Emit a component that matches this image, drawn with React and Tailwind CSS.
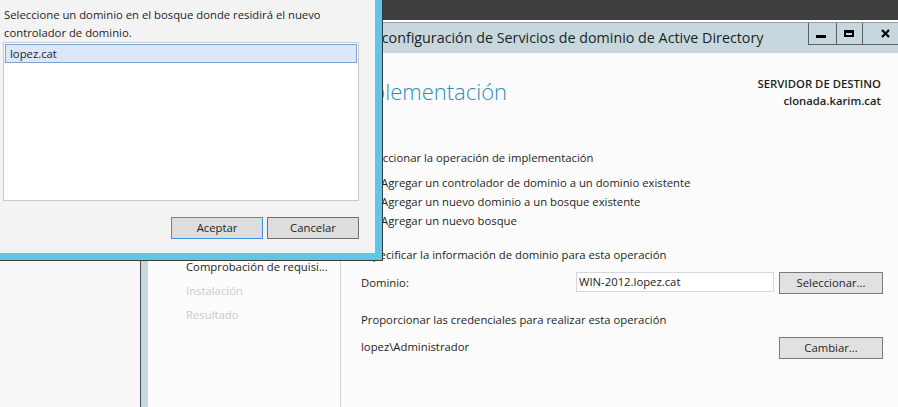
import React from "react";

function Radio() {
  return (
    <span className="inline-block w-[13px] h-[13px] rounded-full border border-[#333] bg-white mr-[5px] shrink-0" />
  );
}

function WinButton({ children, className = "" }) {
  return (
    <button
      className={
        "h-[22px] w-[104px] border border-[#7a7a7a] bg-[#e1e1e1] text-[#1e1e1e] text-[11.3px] leading-[20px] " +
        className
      }
    >
      {children}
    </button>
  );
}

export default function App() {
  const nav = [
    { t: "Configuración de implem...", c: "text-[#1e1e1e]" },
    { t: "Opciones del controlador...", c: "text-[#1e1e1e]" },
    { t: "Opciones adicionales", c: "text-[#1e1e1e]" },
    { t: "Rutas de acceso", c: "text-[#1e1e1e]" },
    { t: "Revisar opciones", c: "text-[#1e1e1e]" },
    { t: "Comprobación de requisi...", c: "text-[#1e1e1e]" },
    { t: "Instalación", c: "text-[#c8c8c8]" },
    { t: "Resultado", c: "text-[#c8c8c8]" },
  ];

  return (
    <div className="relative w-[898px] h-[407px] overflow-hidden bg-[#f7f7f7] font-['Open_Sans',sans-serif] text-[11.3px] text-[#1e1e1e]">
      <div className="flex flex-col h-full">
        <div className="h-[20px] shrink-0 bg-[#3f3f3f]" />
        <div className="flex flex-1 min-h-0">
          <div className="w-[140px] shrink-0 bg-[#f7f7f7]" />
          <div className="flex-1 flex flex-col border-l border-[#4a5156] bg-[#c6d8dd]">
            <div className="h-[2px] bg-white shrink-0" />
            <div className="h-px bg-[#8fa1a7] shrink-0" />
            {/* title bar */}
            <div className="relative h-[30px] shrink-0 flex items-center justify-center pl-[7px]">
              <span className="text-[14.3px] leading-[30px] text-[#1e1e1e] whitespace-nowrap">
                Asistente para configuración de Servicios de dominio de Active Directory
              </span>
              <div className="absolute right-0 top-0 flex h-[22px] border-b border-[#5b6266]">
                <div className="w-[28px] border-l border-[#5b6266] flex items-end justify-center pb-[6px] pr-[4px]">
                  <div className="w-[10px] h-[3px] bg-black" />
                </div>
                <div className="w-[26px] border-l border-[#5b6266] flex items-center justify-center pr-[2px]">
                  <div className="w-[10px] h-[7px] border-2 border-t-[3px] border-black" />
                </div>
                <div className="w-[36px] border-l border-[#5b6266] flex items-center justify-center pl-[10px]">
                  <svg width="9" height="9" viewBox="0 0 9 9">
                    <path d="M1 1L8 8M8 1L1 8" stroke="black" strokeWidth="2.2" />
                  </svg>
                </div>
              </div>
            </div>
            {/* client */}
            <div className="flex-1 flex flex-col pl-[7px] min-h-0">
              <div className="flex-1 flex flex-col bg-[#fcfcfc]">
                <div className="h-[82px] shrink-0 flex justify-between pl-[26px] pr-[17px]">
                  <div className="pt-[23px] text-[22px] font-light leading-[30px] text-[#2a8dbd] whitespace-nowrap">
                    Configuración de implementación
                  </div>
                  <div className="pt-[22px] text-right font-semibold leading-[17px] text-[#1e1e1e]">
                    <div>SERVIDOR DE DESTINO</div>
                    <div>clonada.karim.cat</div>
                  </div>
                </div>
                <div className="flex-1 flex min-h-0">
                  <div className="w-[193px] shrink-0 border-r border-[#d5d5d5]">
                    {nav.map((n, i) => (
                      <div
                        key={i}
                        className={
                          "h-[24px] leading-[24px] pl-[38px] whitespace-nowrap " +
                          n.c +
                          (i === 0 ? " border-l-4 border-[#2a8dbd] pl-[34px]" : "")
                        }
                      >
                        {n.t}
                      </div>
                    ))}
                  </div>
                  <div className="flex-1 flex flex-col pl-[20px] pr-[15px]">
                    <div className="mt-[13px] h-[19px] leading-[19px]">
                      Seleccionar la operación de implementación
                    </div>
                    <div className="mt-[6px] flex flex-col">
                      {[
                        "Agregar un controlador de dominio a un dominio existente",
                        "Agregar un nuevo dominio a un bosque existente",
                        "Agregar un nuevo bosque",
                      ].map((t) => (
                        <div key={t} className="h-[19px] leading-[19px] flex items-center pl-[2px]">
                          <Radio />
                          {t}
                        </div>
                      ))}
                    </div>
                    <div className="mt-[15px] h-[19px] leading-[19px]">
                      Especificar la información de dominio para esta operación
                    </div>
                    <div className="mt-[8px] flex items-start h-[21px]">
                      <div className="flex-1 leading-[21px]">Dominio:</div>
                      <div className="w-[198px] h-[20px] border border-[#d6d6e0] bg-white pl-[2px] leading-[18px]">
                        WIN-2012.lopez.cat
                      </div>
                      <WinButton className="ml-[5px] h-[21px]">Seleccionar...</WinButton>
                    </div>
                    <div className="mt-[17px] h-[19px] leading-[19px]">
                      Proporcionar las credenciales para realizar esta operación
                    </div>
                    <div className="mt-[8px] flex items-start justify-between">
                      <div className="h-[19px] leading-[19px]">lopez\Administrador</div>
                      <WinButton>Cambiar...</WinButton>
                    </div>
                  </div>
                </div>
              </div>
            </div>
          </div>
        </div>
      </div>

      {/* dialog overlay */}
      <div className="absolute left-0 top-0 z-10 w-[383px] h-[261px] border-r border-b border-[#3a3a3a] bg-[#5fc6e9]">
        <div className="w-[375px] h-[253px] bg-[#f3f3f3] flex flex-col">
          <p className="pl-[4px] pt-[6px] leading-[18px] whitespace-nowrap">
            Seleccione un dominio en el bosque donde residirá el nuevo
            <br />
            controlador de dominio.
          </p>
          <div className="ml-[3px] w-[356px] h-[159px] border border-[#c9c9c9] bg-white p-px">
            <div className="h-[19px] border border-[#7da2ce] bg-[#dae8fa] pl-[4px] leading-[17px]">
              lopez.cat
            </div>
          </div>
          <div className="mt-[16px] flex justify-end gap-[4px] pr-[16px]">
            <button className="w-[92px] h-[22px] border border-[#3d8ee6] bg-[#dddddd] text-[11.3px] leading-[20px]">
              Aceptar
            </button>
            <button className="w-[92px] h-[22px] border border-[#707070] bg-[#dddddd] text-[11.3px] leading-[20px]">
              Cancelar
            </button>
          </div>
        </div>
      </div>
    </div>
  );
}
